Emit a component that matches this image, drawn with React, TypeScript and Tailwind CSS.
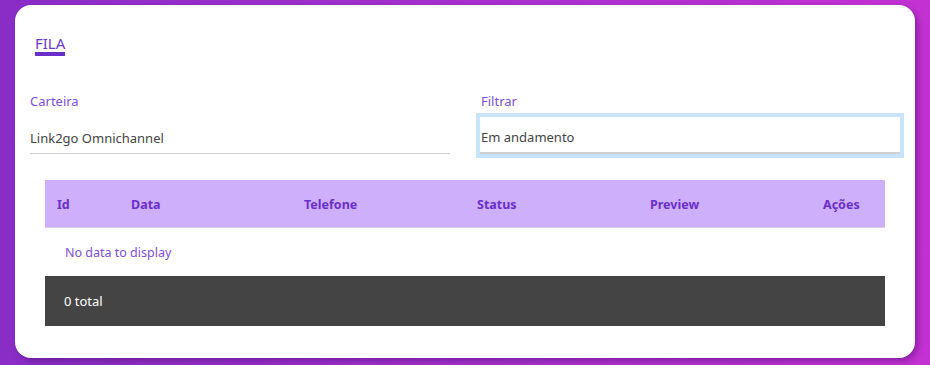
import React from "react";

const font = { fontFamily: '"Noto Sans", "Open Sans", sans-serif' };

export default function App() {
  const cols = [
    { label: "Id", w: "w-[74px]" },
    { label: "Data", w: "w-[173px]" },
    { label: "Telefone", w: "w-[173px]" },
    { label: "Status", w: "w-[173px]" },
    { label: "Preview", w: "w-[173px]" },
    { label: "Ações", w: "w-[74px]" },
  ];
  return (
    <div
      className="w-[930px] h-[365px] bg-gradient-to-r from-[#8a2cc6] to-[#c431d3] pt-[5px] px-[15px] overflow-hidden font-['Noto_Sans',sans-serif]"
      style={font}
    >
      <div className="w-[900px] h-[353px] bg-white rounded-[16px] shadow-[3px_3px_6px_rgba(40,0,80,0.35)] pt-[30px] flex flex-col">
        <div className="pl-[20px] flex">
          <div className="flex flex-col">
            <span className="text-[15px] leading-[17px] text-[#6b3bcd]">FILA</span>
            <div className="h-[4px] bg-[#6a2ecb]" />
          </div>
        </div>

        <div className="mt-[36px] px-[15px] grid grid-cols-2 gap-[30px]">
          <div className="flex flex-col">
            <span className="text-[13px] leading-[18px] text-[#7d4fda]">Carteira</span>
            <div className="mt-[7px] h-[37px] border-b border-[#d0d0d0] flex items-center pt-[7px] text-[13px] text-[#444]">
              Link2go Omnichannel
            </div>
          </div>
          <div className="flex flex-col">
            <span className="text-[13px] leading-[18px] text-[#7d4fda] pl-[1px]">Filtrar</span>
            <div className="mt-[7px] h-[37px] border-b-2 border-[#cfcfcf] flex items-center pt-[7px] pl-[1px] text-[13px] text-[#444] outline outline-[4px] outline-[#c8e4fb]">
              Em andamento
            </div>
          </div>
        </div>

        <div className="mt-[26px] mx-[30px] flex flex-col">
          <div className="h-[48px] bg-[#cdaffc] border-b border-[#d8d0e8] flex items-center pt-[3px]">
            {cols.map((c) => (
              <div key={c.label} className={`${c.w} pl-[12px] text-[12.5px] font-bold text-[#6a2fcb]`}>
                {c.label}
              </div>
            ))}
          </div>
          <div className="h-[48px] flex items-center pl-[20px] pt-[3px] text-[12.5px] text-[#7d4fda]">
            No data to display
          </div>
          <div className="h-[50px] bg-[#444444] flex items-center pl-[19px] pt-[2px] text-[13px] text-white">
            0 total
          </div>
        </div>
      </div>
    </div>
  );
}
